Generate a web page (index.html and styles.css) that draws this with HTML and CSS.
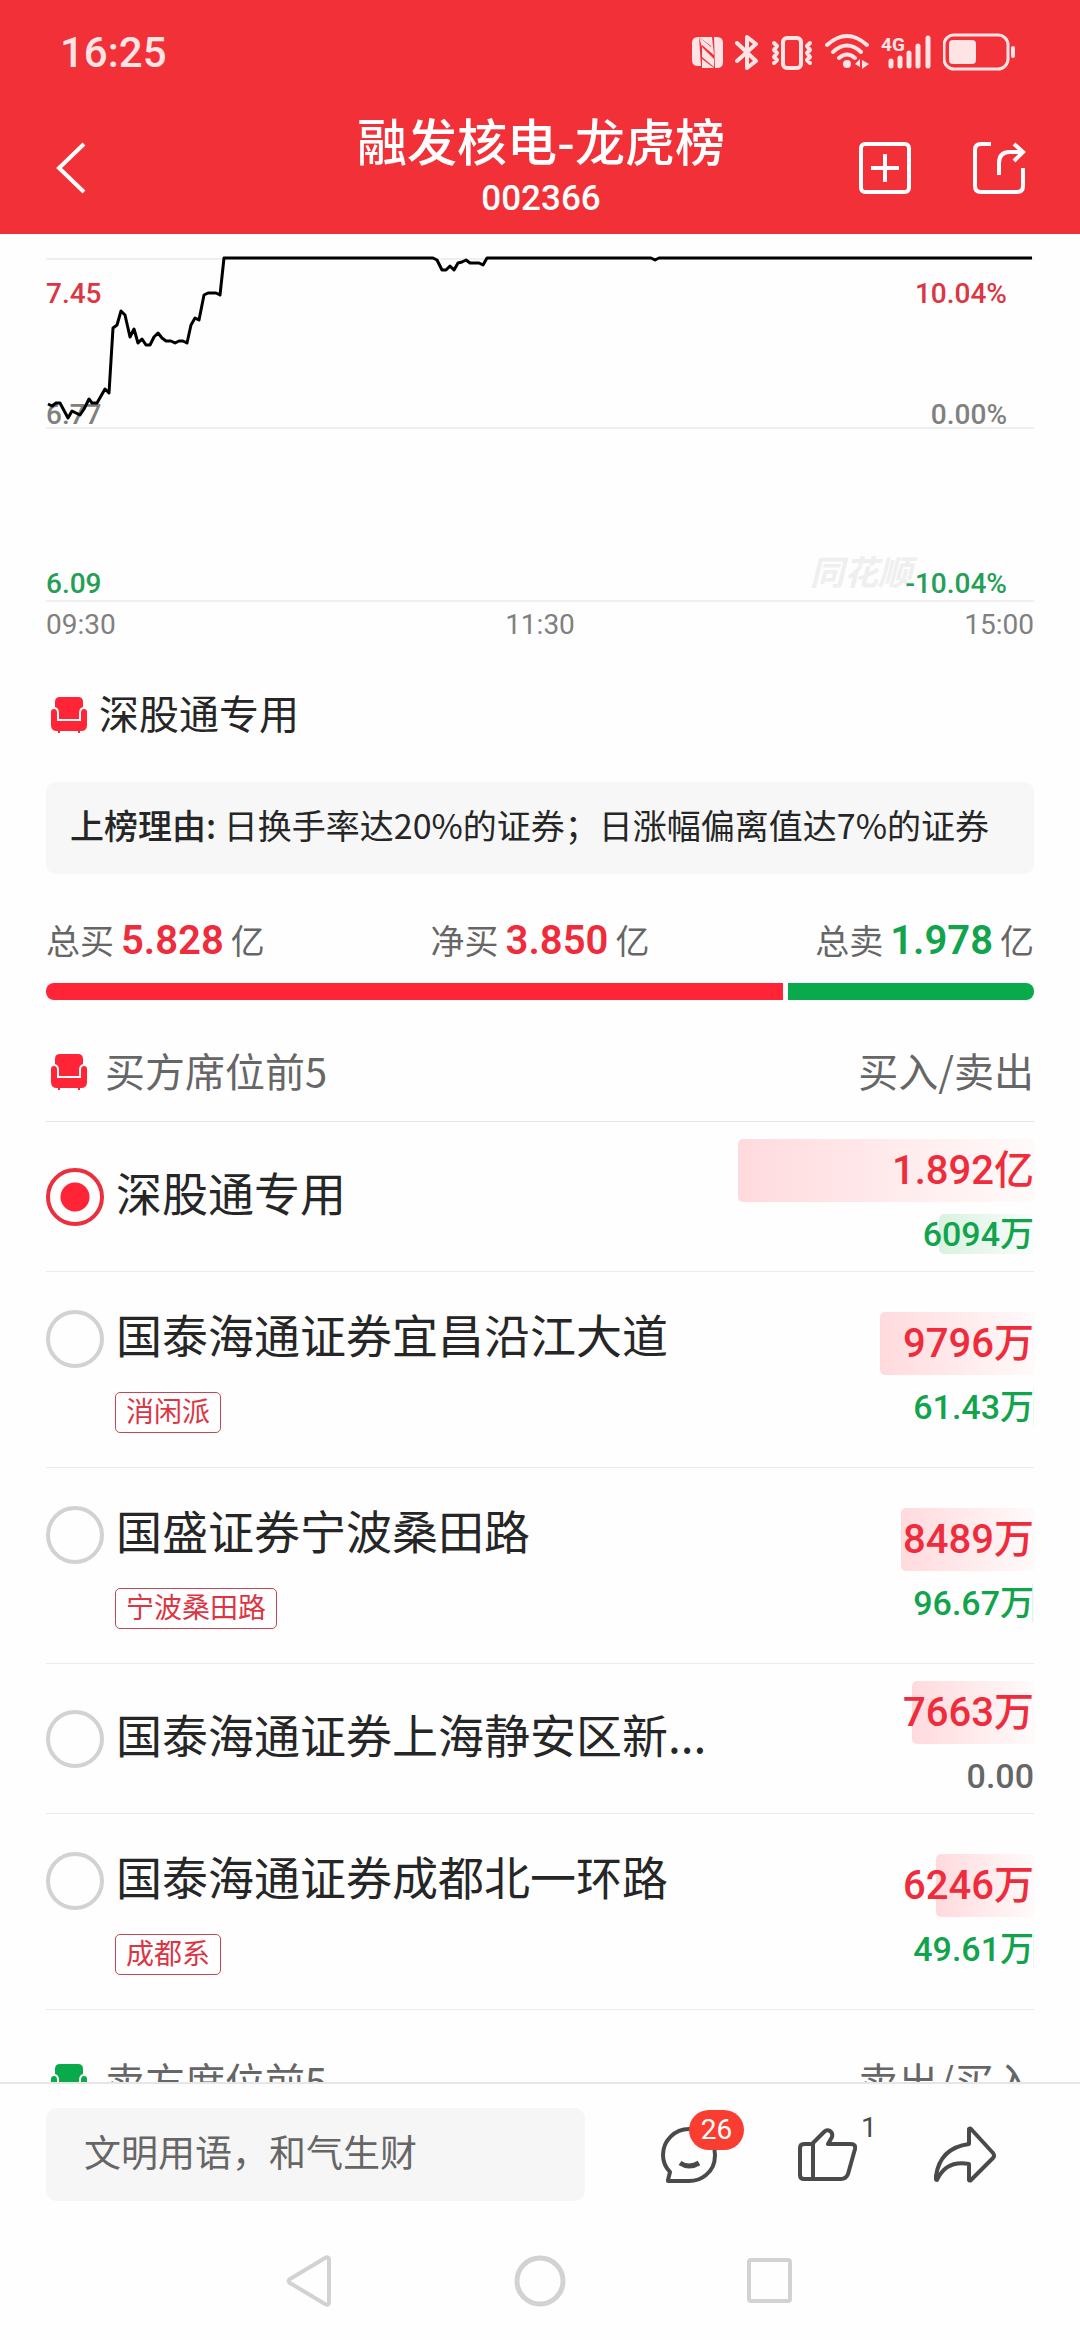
FILE: index.html
```html
<!DOCTYPE html>
<html lang="zh-CN">
<head>
<meta charset="utf-8">
<meta name="viewport" content="width=device-width, initial-scale=1">
<title>融发核电-龙虎榜</title>
<link rel="stylesheet" href="styles.css">
</head>
<body>
<svg class="sprite" aria-hidden="true">
  <symbol id="chair" viewBox="0 0 36 37">
    <path d="M4 11V6Q4 1 9 1H27Q32 1 32 6V11Q28 12 28 17V23H8V17Q8 12 4 11Z"/>
    <path d="M0 16Q0 13 3 13Q6 13 6 17V25H30V17Q30 13 33 13Q36 13 36 16V29Q36 35 30 35H29V37H27V35H9V37H7V35H6Q0 35 0 29Z"/>
  </symbol>
</svg>
<div class="app">
  <header class="top">
    <div class="status">
      <time>16:25</time>
      <div class="status-icons">
        <svg width="31" height="40" viewBox="0 0 31 40"><path d="M6 4H7L9 33H6Q0 33 0 27V10Q0 4 6 4Z" fill="currentColor"/><path d="M25 35H23L22 4H25Q31 4 31 10V29Q31 35 25 35Z" fill="currentColor"/><path d="M7 4L19 14V4H20L22 22L10 12V24L22 34V26L10 14Z" fill="currentColor"/><path d="M7 4H19V13ZM10 26V35H22Z" fill="currentColor"/></svg>
        <svg width="24" height="40" viewBox="0 0 24 40"><path d="M2 10L21 28L12 35V4L21 11L2 28" fill="none" stroke="currentColor" stroke-width="4" stroke-linecap="round" stroke-linejoin="round"/></svg>
        <svg width="42" height="40" viewBox="0 0 42 40"><rect x="12" y="5" width="18" height="30" rx="4" fill="none" stroke="currentColor" stroke-width="4"/><path d="M3 10L6 13L3 17L6 20L3 24L6 27L3 30M39 10L36 13L39 17L36 20L39 24L36 27L39 30" fill="none" stroke="currentColor" stroke-width="4" stroke-linecap="round" stroke-linejoin="round"/></svg>
        <svg width="44" height="40" viewBox="0 0 44 40"><path d="M2 12Q22-6 42 12M8 19Q22 6 36 19M14 25Q22 18 30 25" fill="none" stroke="currentColor" stroke-width="4" stroke-linecap="round"/><circle cx="22" cy="31" r="4" fill="currentColor"/><path d="M30 31L35 26V34ZM37 27L44 31L37 36Z" fill="currentColor"/></svg>
        <svg width="50" height="40" viewBox="0 0 50 40"><text class="net" x="0" y="18">4G</text><path d="M10 28V33M19 25V33M28 20V33M37 13V33M47 5V33" fill="none" stroke="currentColor" stroke-width="5" stroke-linecap="round"/></svg>
        <svg width="73" height="40" viewBox="0 0 73 40"><rect x="1" y="2" width="64" height="34" rx="10" fill="none" stroke="currentColor" stroke-width="3"/><rect x="6" y="7" width="27" height="24" rx="4" fill="currentColor"/><path d="M70 15V23" stroke="currentColor" stroke-width="4" stroke-linecap="round"/></svg>
      </div>
    </div>
    <div class="titlebar">
      <button class="icon-btn" aria-label="返回"><svg width="32" height="56" viewBox="0 0 32 56"><path d="M28 4L3 28L28 52" fill="none" stroke="currentColor" stroke-width="4"/></svg></button>
      <div class="title">
        <h1>融发核电-龙虎榜</h1>
        <p>002366</p>
      </div>
      <div class="tools">
        <button class="icon-btn" aria-label="添加"><svg width="52" height="52" viewBox="0 0 52 52"><rect x="2" y="2" width="48" height="48" rx="4" fill="none" stroke="currentColor" stroke-width="4"/><path d="M26 12V40M12 26H40" stroke="currentColor" stroke-width="4"/></svg></button>
        <button class="icon-btn" aria-label="分享"><svg width="53" height="52" viewBox="0 0 53 52"><path d="M18 2H8Q2 2 2 8V44Q2 50 8 50H44Q50 50 50 44V26M26 33V21Q26 10 37 10H50M41 2L50 10L41 19" fill="none" stroke="currentColor" stroke-width="4"/></svg></button>
      </div>
    </div>
  </header>

  <main class="content">
    <div class="chart">
      <svg class="plot" viewBox="46 234 988 368" preserveAspectRatio="none" aria-hidden="true">
        <path class="grid" d="M46 259H1034M46 428H1034M46 601H1034"/>
      </svg>
      <span class="watermark">同花顺</span>
      <span class="tick left high up">7.45</span>
      <span class="tick left mid">6.77</span>
      <span class="tick left low down">6.09</span>
      <span class="tick right high up">10.04%</span>
      <span class="tick right mid">0.00%</span>
      <span class="tick right low down">-10.04%</span>
      <svg class="plot" viewBox="46 234 988 368" preserveAspectRatio="none" role="img" aria-label="分时走势">
        <polyline class="price" points="48,404 52,406 56,403 60,403 68,418 72,411 80,415 84,409 89,399 92,403 97,403 105,389 109,393 113,328 117,325 121,311 125,315 130,337 134,329 138,343 142,339 146,345 150,345 154,337 158,333 162,338 166,341 171,341 175,343 179,341 183,341 187,343 191,325 195,318 199,320 204,295 208,293 216,293 220,295 224,258 433,258 437,260 442,270 446,270 450,266 454,270 458,263 462,262 466,260 470,263 479,263 483,265 487,258 651,258 655,260 659,258 1032,258"/>
      </svg>
    </div>
    <div class="axis"><span>09:30</span><span>11:30</span><span>15:00</span></div>

    <h2 class="seat-title"><svg class="chair red" viewBox="0 0 36 37"><use href="#chair"/></svg><span>深股通专用</span></h2>
    <p class="reason"><b>上榜理由:</b> 日换手率达20%的证券；日涨幅偏离值达7%的证券</p>

    <div class="totals">
      <p>总买<strong class="up">5.828</strong>亿</p>
      <p>净买<strong class="up">3.850</strong>亿</p>
      <p>总卖<strong class="down">1.978</strong>亿</p>
    </div>
    <div class="ratio"><i class="buy" style="flex-grow:75"></i><i class="sell" style="flex-grow:25"></i></div>

    <section>
      <div class="seat-head"><h3><svg class="chair red" viewBox="0 0 36 37"><use href="#chair"/></svg><span>买方席位前5</span></h3><span>买入/卖出</span></div>
      <ul class="seats">
        <li class="seat">
          <div class="who"><label><input type="radio" name="seat" checked><span>深股通专用</span></label></div>
          <div class="amounts"><p class="in"><i style="width:100%"></i><span>1.892亿</span></p><p class="out"><i style="width:32%"></i><span>6094万</span></p></div>
        </li>
        <li class="seat tagged">
          <div class="who"><label><input type="radio" name="seat"><span>国泰海通证券宜昌沿江大道</span></label><em>消闲派</em></div>
          <div class="amounts"><p class="in"><i style="width:52%"></i><span>9796万</span></p><p class="out"><i style="width:1px"></i><span>61.43万</span></p></div>
        </li>
        <li class="seat tagged">
          <div class="who"><label><input type="radio" name="seat"><span>国盛证券宁波桑田路</span></label><em>宁波桑田路</em></div>
          <div class="amounts"><p class="in"><i style="width:45%"></i><span>8489万</span></p><p class="out"><i style="width:2px"></i><span>96.67万</span></p></div>
        </li>
        <li class="seat">
          <div class="who"><label><input type="radio" name="seat"><span>国泰海通证券上海静安区新...</span></label></div>
          <div class="amounts"><p class="in"><i style="width:41%"></i><span>7663万</span></p><p class="out none"><span>0.00</span></p></div>
        </li>
        <li class="seat tagged">
          <div class="who"><label><input type="radio" name="seat"><span>国泰海通证券成都北一环路</span></label><em>成都系</em></div>
          <div class="amounts"><p class="in"><i style="width:33%"></i><span>6246万</span></p><p class="out"><i style="width:1px"></i><span>49.61万</span></p></div>
        </li>
      </ul>
    </section>
    <section>
      <div class="seat-head"><h3><svg class="chair green" viewBox="0 0 36 37"><use href="#chair"/></svg><span>卖方席位前5</span></h3><span>卖出/买入</span></div>
    </section>
  </main>

  <footer class="comment-bar">
    <input class="comment" type="text" placeholder="文明用语，和气生财" aria-label="发表评论">
    <div class="actions">
      <button aria-label="评论"><svg width="58" height="58" viewBox="0 0 58 58"><path d="M8 54L10 46Q3 39 3 29A26 26 0 0 1 29 3A26 26 0 0 1 55 29Q55 42 46 49Q39 55 29 55H8Z" fill="none" stroke="currentColor" stroke-width="4" stroke-linejoin="round"/><path d="M20 37Q29 43 39 37" fill="none" stroke="currentColor" stroke-width="5"/></svg><span class="badge">26</span></button>
      <button aria-label="点赞"><svg width="60" height="58" viewBox="0 0 60 58"><path d="M7 18H15L27 6Q30 3 33 5Q36 7 35 11L31 18H54Q59 18 58 23L51 48Q49 53 44 53H7Q3 53 3 49V22Q3 18 7 18ZM16 18V53" fill="none" stroke="currentColor" stroke-width="4" stroke-linejoin="round"/></svg><span class="count">1</span></button>
      <button aria-label="转发"><svg width="62" height="58" viewBox="0 0 62 58"><path d="M35 3Q36 2 37 3L59 27Q61 30 59 32L37 54Q36 55 35 54V38Q12 34 3 54Q1 54 2 50Q6 22 35 18Z" fill="none" stroke="currentColor" stroke-width="4" stroke-linejoin="round"/></svg></button>
    </div>
  </footer>
  <nav class="sysnav" aria-label="系统导航">
    <button aria-label="后退"><svg width="52" height="52" viewBox="0 0 52 52"><path d="M41 3Q45 1 45 5V47Q45 51 41 49L6 28Q3 26 6 24Z" fill="none" stroke="currentColor" stroke-width="4"/></svg></button>
    <button aria-label="主页"><svg width="52" height="52" viewBox="0 0 52 52"><circle cx="26" cy="26" r="23" fill="none" stroke="currentColor" stroke-width="5"/></svg></button>
    <button aria-label="最近任务"><svg width="52" height="52" viewBox="0 0 52 52"><rect x="5" y="5" width="41" height="41" rx="2" fill="none" stroke="currentColor" stroke-width="4"/></svg></button>
  </nav>
</div>
</body>
</html>
```

FILE: styles.css
```css
:root {
  --red: #ff2436;
  --red-text: #ee2c3b;
  --green: #09aa4b;
  --green-text: #12a34d;
  --ink: #262626;
  --muted: #666;
  --line: #ebebeb;
  --num: Roboto, "Noto Sans CJK SC", sans-serif;
}

* { box-sizing: border-box; margin: 0; padding: 0; }

body {
  background: #fefefe;
  color: var(--ink);
  font-family: "Noto Sans CJK SC", "Noto Sans", sans-serif;
  font-size: 34px;
}

button { border: 0; background: none; color: inherit; font: inherit; }
svg { display: block; flex: none; }
ul { list-style: none; }
.sprite { position: absolute; width: 0; height: 0; }

.app { display: flex; flex-direction: column; height: 100vh; }

/* header */
.top { flex: none; background: #f23037; color: #fff; }
.status {
  display: flex;
  justify-content: space-between;
  align-items: center;
  height: 102px;
  padding: 4px 64px 0 60px;
  color: #fee4e5;
}
.status time { font-family: var(--num); font-size: 42px; font-weight: 500; line-height: 60px; }
.status-icons { display: flex; gap: 12px; }
.net { font: 700 19px Roboto, sans-serif; fill: currentColor; }

.titlebar {
  display: grid;
  grid-template-columns: 1fr auto 1fr;
  align-items: center;
  height: 132px;
  padding: 0 54px 0 56px;
}
.icon-btn { justify-self: start; }
.title { padding-bottom: 5px; text-align: center; }
.title h1 { font-size: 50px; font-weight: 500; line-height: 62px; }
.title p { margin-top: 5px; font-family: var(--num); font-size: 35px; font-weight: 500; line-height: 48px; }
.tools { display: flex; justify-content: flex-end; gap: 62px; }

/* chart */
.content { flex: 1; min-height: 0; overflow: hidden; padding: 0 46px; }
.chart { position: relative; height: 368px; }
.plot { position: absolute; inset: 0; width: 100%; height: 100%; }
.grid { fill: none; stroke: #efefef; stroke-width: 2; }
.price { fill: none; stroke: #000; stroke-width: 3; stroke-linejoin: round; vector-effect: non-scaling-stroke; }
.tick { position: absolute; font-family: var(--num); font-size: 28px; font-weight: 500; line-height: 36px; color: #808080; }
.tick.left { left: 0; }
.tick.right { right: 27px; }
.tick.high { top: 42px; }
.tick.mid { top: 163px; }
.tick.low { top: 332px; }
.up { color: var(--red-text); }
.down { color: var(--green-text); }
.tick.up { color: #dc3543; }
.tick.down { color: #239f56; }
.watermark {
  position: absolute;
  right: 122px;
  top: 317px;
  font-size: 34px;
  font-weight: 700;
  font-style: italic;
  line-height: 40px;
  color: #efefef;
}
.axis {
  display: flex;
  justify-content: space-between;
  font-family: var(--num);
  font-size: 28px;
  line-height: 46px;
  color: #808080;
}

/* summary */
.chair { width: 36px; height: 37px; }
.red { fill: var(--red); }
.green { fill: var(--green); }
.seat-title {
  display: flex;
  align-items: center;
  gap: 12px;
  margin-top: 36px;
  padding-left: 5px;
  font-size: 40px;
  font-weight: 400;
  line-height: 60px;
}
.seat-title span, .seat-head span { padding-bottom: 4px; line-height: 56px; }
.reason {
  margin-top: 38px;
  padding: 18px 24px 24px;
  border-radius: 10px;
  background: #f7f7f7;
  line-height: 50px;
  white-space: nowrap;
}
.reason b { font-weight: 500; }
.totals {
  display: flex;
  justify-content: space-between;
  margin-top: 42px;
  line-height: 48px;
  color: var(--muted);
}
.totals p { display: flex; align-items: baseline; height: 48px; }
.totals strong { margin: 0 7px; font-family: var(--num); font-size: 40px; font-weight: 600; }
.ratio { display: flex; gap: 5px; height: 17px; margin-top: 19px; }
.ratio i { flex-basis: 0; }
.buy { background: var(--red); border-radius: 8px 0 0 8px; }
.sell { background: var(--green); border-radius: 0 8px 8px 0; }

/* seats */
.seat-head {
  display: flex;
  justify-content: space-between;
  align-items: center;
  height: 100px;
  margin-top: 22px;
  border-bottom: 1px solid #e3e3e3;
  font-size: 40px;
  color: var(--muted);
}
.seat-head h3 { display: flex; align-items: center; gap: 18px; padding-left: 5px; font-size: 40px; font-weight: 400; }
.seat {
  display: flex;
  justify-content: space-between;
  align-items: center;
  min-height: 150px;
  border-bottom: 1px solid var(--line);
}
.seat.tagged { min-height: 196px; }
.tagged .who { padding-top: 3px; }
.who label { display: flex; align-items: center; gap: 12px; }
.who label span { padding-bottom: 12px; font-size: 46px; line-height: 46px; }
.who input {
  appearance: none;
  flex: none;
  width: 58px;
  height: 58px;
  border: 4px solid #d2d2d2;
  border-radius: 50%;
}
.who input:checked {
  border-color: #ea2f3e;
  background: radial-gradient(circle, var(--red) 14px, transparent 15px);
}
.who em {
  display: inline-block;
  margin: 24px 0 0 69px;
  padding: 0 10px 4px;
  border: 1px solid #c64552;
  border-radius: 5px;
  font-size: 28px;
  font-style: normal;
  line-height: 35px;
  color: #dc3543;
  vertical-align: top;
}
.amounts { width: 30%; font-family: var(--num); text-align: right; }
.amounts p { display: grid; justify-items: end; align-items: center; }
.amounts i, .amounts span { grid-area: 1 / 1; }
.amounts i { height: 100%; border-radius: 5px 0 0 5px; }
.amounts .in { height: 63px; font-size: 40px; font-weight: 500; line-height: 60px; color: var(--red-text); }
.amounts .in i { background: linear-gradient(to right, #ffdadd, #fffafa); }
.amounts .out { height: 40px; margin-top: 12px; font-weight: 500; line-height: 40px; color: var(--green-text); }
.amounts .out i { background: linear-gradient(to right, #d9f2e0, #fafdfb); }
.amounts .out.none { color: var(--muted); }

/* comment bar */
.comment-bar {
  display: flex;
  flex: none;
  gap: 35px;
  padding: 24px 46px;
  border-top: 2px solid #e6e6e6;
}
.comment {
  flex: 1;
  min-width: 0;
  height: 93px;
  padding: 0 38px 8px;
  border: 0;
  border-radius: 11px;
  background: #f6f6f6;
  font: 37px "Noto Sans CJK SC", sans-serif;
}
.comment::placeholder { color: var(--muted); }
.actions { display: flex; color: #4a4a4a; }
.actions button { position: relative; display: flex; justify-content: center; align-items: center; width: 138px; }
.badge {
  position: absolute;
  left: 69px;
  top: 2px;
  width: 55px;
  border-radius: 20px;
  background: #f93e31;
  font-family: var(--num);
  font-size: 28px;
  line-height: 40px;
  color: #fff;
}
.count { position: absolute; left: 103px; top: 0; font-family: var(--num); font-size: 28px; line-height: 40px; }

.sysnav { display: flex; flex: none; justify-content: center; padding: 30px 0 33px; color: #d2d2d2; }
.sysnav button { display: flex; justify-content: center; width: 230px; }
```
